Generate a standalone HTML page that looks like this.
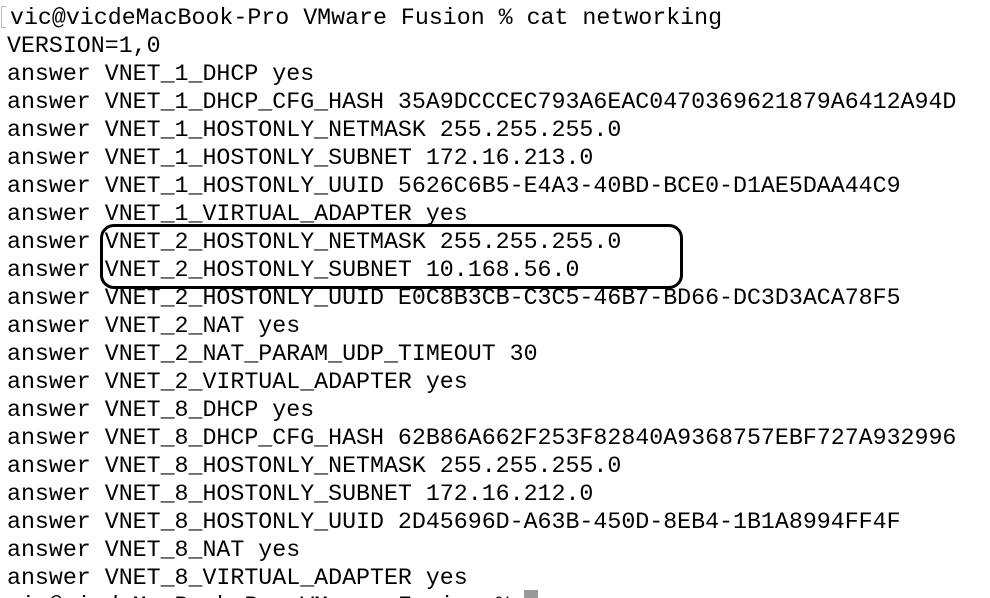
<!DOCTYPE html>
<html><head><style>
html,body{margin:0;padding:0;background:#fff;width:990px;height:598px;overflow:hidden;position:relative}
pre{margin:0;position:absolute;left:7px;top:4px;font-family:"Liberation Mono",monospace;font-size:23.28px;line-height:28px;color:#000;letter-spacing:0}
.f{position:relative;left:3px}
.box{position:absolute;left:100px;top:224px;width:577px;height:59px;border:3px solid #000;border-radius:14px}
.cur{position:absolute;left:524px;top:590px;width:14px;height:10px;background:#999}
.br{position:absolute;left:1px;top:6px;width:4px;height:20px;border:1px solid #bbb;border-right:none}
</style></head><body>
<div class="br"></div>
<pre><span class="f">vic@vicdeMacBook-Pro VMware Fusion % cat networking</span>
VERSION=1,0
answer VNET_1_DHCP yes
answer VNET_1_DHCP_CFG_HASH 35A9DCCCEC793A6EAC0470369621879A6412A94D
answer VNET_1_HOSTONLY_NETMASK 255.255.255.0
answer VNET_1_HOSTONLY_SUBNET 172.16.213.0
answer VNET_1_HOSTONLY_UUID 5626C6B5-E4A3-40BD-BCE0-D1AE5DAA44C9
answer VNET_1_VIRTUAL_ADAPTER yes
answer VNET_2_HOSTONLY_NETMASK 255.255.255.0
answer VNET_2_HOSTONLY_SUBNET 10.168.56.0
answer VNET_2_HOSTONLY_UUID E0C8B3CB-C3C5-46B7-BD66-DC3D3ACA78F5
answer VNET_2_NAT yes
answer VNET_2_NAT_PARAM_UDP_TIMEOUT 30
answer VNET_2_VIRTUAL_ADAPTER yes
answer VNET_8_DHCP yes
answer VNET_8_DHCP_CFG_HASH 62B86A662F253F82840A9368757EBF727A932996
answer VNET_8_HOSTONLY_NETMASK 255.255.255.0
answer VNET_8_HOSTONLY_SUBNET 172.16.212.0
answer VNET_8_HOSTONLY_UUID 2D45696D-A63B-450D-8EB4-1B1A8994FF4F
answer VNET_8_NAT yes
answer VNET_8_VIRTUAL_ADAPTER yes
vic@vicdeMacBook-Pro VMware Fusion % </pre>
<div class="box"></div>
<div class="cur"></div>
</body></html>
